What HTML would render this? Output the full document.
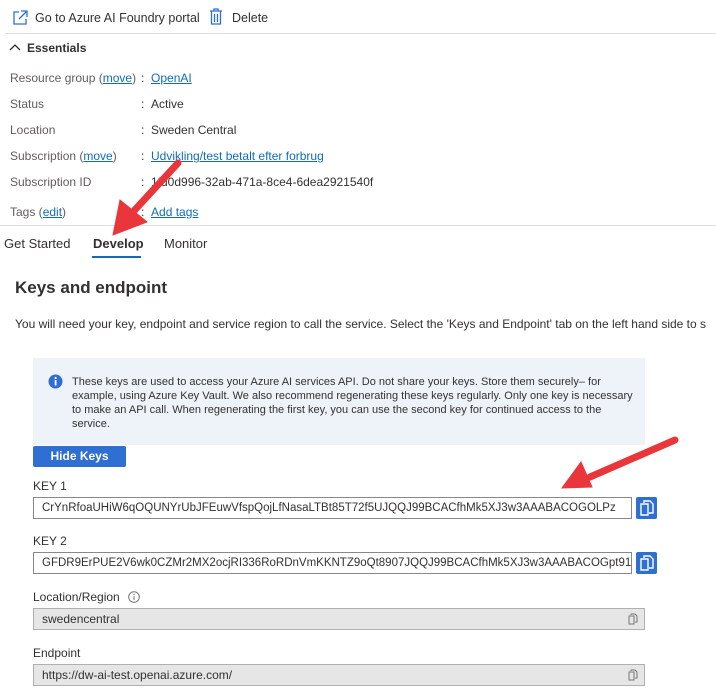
<!DOCTYPE html>
<html><head><style>
body{margin:0;width:716px;height:694px;overflow:hidden;background:#fff;font-family:"Liberation Sans",sans-serif;color:#323130;position:relative}
.a{position:absolute;white-space:nowrap}
.t{font-size:12px}
.lbl{color:#605e5c}
a,.lk{color:#0f6cbd;text-decoration:underline}
.inp{position:absolute;border:1px solid #8a8886;background:#fff;box-sizing:border-box;height:22px;font-size:12px;line-height:20px;padding-left:8px;color:#323130;white-space:nowrap;overflow:hidden}
.gray{background:#e6e6e6;border-color:#b0b0b0}
.cb{position:absolute;width:21px;height:22px;background:#2f6fd1;border-radius:2px}
</style></head><body>
<svg class="a" style="left:11px;top:9px" width="18" height="18" viewBox="0 0 18 18"><path d="M8 3H3v12h12v-5M10 2h6v6M16 2L8 10" fill="none" stroke="#2f6fd1" stroke-width="1.3"/></svg>
<div class="a t" style="left:35px;top:11px;font-size:12.5px">Go to Azure AI Foundry portal</div>
<svg class="a" style="left:209px;top:8px" width="14" height="18" viewBox="0 0 14 18"><path d="M1 3h12M5 3V1h4v2M2.5 3v13h9V3M5.5 6v8M8.5 6v8" fill="none" stroke="#2f6fd1" stroke-width="1.3"/></svg>
<div class="a t" style="left:232px;top:11px;font-size:12.5px">Delete</div>
<div class="a" style="left:5px;top:33px;width:711px;height:1px;background:#e1dfdd"></div>
<svg class="a" style="left:9px;top:43px" width="12" height="8"><path d="M1 7l5-5 5 5" fill="none" stroke="#323130" stroke-width="1.3"/></svg>
<div class="a t" style="left:27px;top:41px;font-weight:bold;font-size:12px">Essentials</div>

<div class="a t lbl" style="left:10px;top:71px">Resource group (<span class="lk">move</span>)</div>
<div class="a t" style="left:141px;top:71px">: &nbsp;<span class="lk">OpenAI</span></div>
<div class="a t lbl" style="left:10px;top:97px">Status</div>
<div class="a t" style="left:141px;top:97px">: &nbsp;Active</div>
<div class="a t lbl" style="left:10px;top:123px">Location</div>
<div class="a t" style="left:141px;top:123px">: &nbsp;Sweden Central</div>
<div class="a t lbl" style="left:10px;top:149px">Subscription (<span class="lk">move</span>)</div>
<div class="a t" style="left:141px;top:149px">: &nbsp;<span class="lk">Udvikling/test betalt efter forbrug</span></div>
<div class="a t lbl" style="left:10px;top:175px">Subscription ID</div>
<div class="a t" style="left:141px;top:175px">: &nbsp;1fd0d996-32ab-471a-8ce4-6dea2921540f</div>
<div class="a t lbl" style="left:10px;top:205px">Tags (<span class="lk">edit</span>)</div>
<div class="a t" style="left:141px;top:205px">: &nbsp;<span class="lk">Add tags</span></div>
<div class="a" style="left:0;top:225px;width:716px;height:1px;background:#e1dfdd"></div>

<div class="a" style="left:4px;top:236px;font-size:13px">Get Started</div>
<div class="a" style="left:93px;top:236px;font-size:13px;font-weight:bold">Develop</div>
<div class="a" style="left:92px;top:256px;width:49px;height:2px;background:#0f6cbd"></div>
<div class="a" style="left:164px;top:236px;font-size:13px">Monitor</div>

<div class="a" style="left:15px;top:278px;font-size:17px;font-weight:bold;color:#323130">Keys and endpoint</div>
<div class="a" style="left:15px;top:317px;font-size:12px">You will need your key, endpoint and service region to call the service. Select the 'Keys and Endpoint' tab on the left hand side to s</div>

<div class="a" style="left:33px;top:358px;width:612px;height:87px;background:#eef3fa"></div>
<svg class="a" style="left:48px;top:374px" width="15" height="15"><circle cx="7.5" cy="7.5" r="7" fill="#2f6fd1"/><rect x="6.7" y="6" width="1.8" height="5.5" fill="#fff"/><circle cx="7.6" cy="4" r="1.1" fill="#fff"/></svg>
<div class="a" style="left:72px;top:375px;font-size:11px;line-height:14px;white-space:normal;width:565px">These keys are used to access your Azure AI services API. Do not share your keys. Store them securely– for example, using Azure Key Vault. We also recommend regenerating these keys regularly. Only one key is necessary to make an API call. When regenerating the first key, you can use the second key for continued access to the service.</div>

<div class="a" style="left:33px;top:446px;width:93px;height:21px;background:#2f6fd1;border-radius:2px;color:#fff;font-weight:bold;font-size:12px;text-align:center;line-height:21px">Hide Keys</div>

<div class="a" style="left:33px;top:479px;font-size:12px">KEY 1</div>
<div class="inp" style="left:33px;top:497px;width:599px;font-size:11.5px;letter-spacing:0px">CrYnRfoaUHiW6qOQUNYrUbJFEuwVfspQojLfNasaLTBt85T72f5UJQQJ99BCACfhMk5XJ3w3AAABACOGOLPz</div>
<div class="cb" style="left:636px;top:497px"></div>
<svg class="a" style="left:640px;top:500px" width="14" height="16"><path d="M4 3V1h6l3 3v9H9M1 4h7l0 0v11H1z" fill="none" stroke="#fff" stroke-width="1.4"/></svg>

<div class="a" style="left:33px;top:534px;font-size:12px">KEY 2</div>
<div class="inp" style="left:33px;top:552px;width:599px;font-size:11.5px;letter-spacing:0px">GFDR9ErPUE2V6wk0CZMr2MX2ocjRI336RoRDnVmKKNTZ9oQt8907JQQJ99BCACfhMk5XJ3w3AAABACOGpt91</div>
<div class="cb" style="left:636px;top:552px"></div>
<svg class="a" style="left:640px;top:555px" width="14" height="16"><path d="M4 3V1h6l3 3v9H9M1 4h7l0 0v11H1z" fill="none" stroke="#fff" stroke-width="1.4"/></svg>

<div class="a" style="left:33px;top:590px;font-size:12px">Location/Region</div>
<svg class="a" style="left:128px;top:591px" width="12" height="12"><circle cx="6" cy="6" r="5.3" fill="none" stroke="#777"/><path d="M6 5v4" stroke="#777"/><circle cx="6" cy="3.4" r=".7" fill="#777"/></svg>
<div class="inp gray" style="left:33px;top:608px;width:612px">swedencentral</div>
<svg class="a" style="left:628px;top:613px" width="10" height="12"><path d="M3 2V1h4l2 2v6H7M1 3h5v8H1z" fill="none" stroke="#777"/></svg>

<div class="a" style="left:33px;top:646px;font-size:12px">Endpoint</div>
<div class="inp gray" style="left:33px;top:664px;width:612px">https://dw-ai-test.openai.azure.com/</div>
<svg class="a" style="left:628px;top:669px" width="10" height="12"><path d="M3 2V1h4l2 2v6H7M1 3h5v8H1z" fill="none" stroke="#777"/></svg>

<svg class="a" style="left:0;top:0" width="716" height="694">
<g fill="#e8363a" stroke="#e8363a" stroke-linecap="round">
<line x1="178" y1="163" x2="132" y2="213" stroke-width="7"/>
<polygon points="113,235 120,200 147,222"/>
<line x1="675" y1="440" x2="590" y2="477" stroke-width="7"/>
<polygon points="562,488 581,462 592,487"/>
</g></svg>
</body></html>
